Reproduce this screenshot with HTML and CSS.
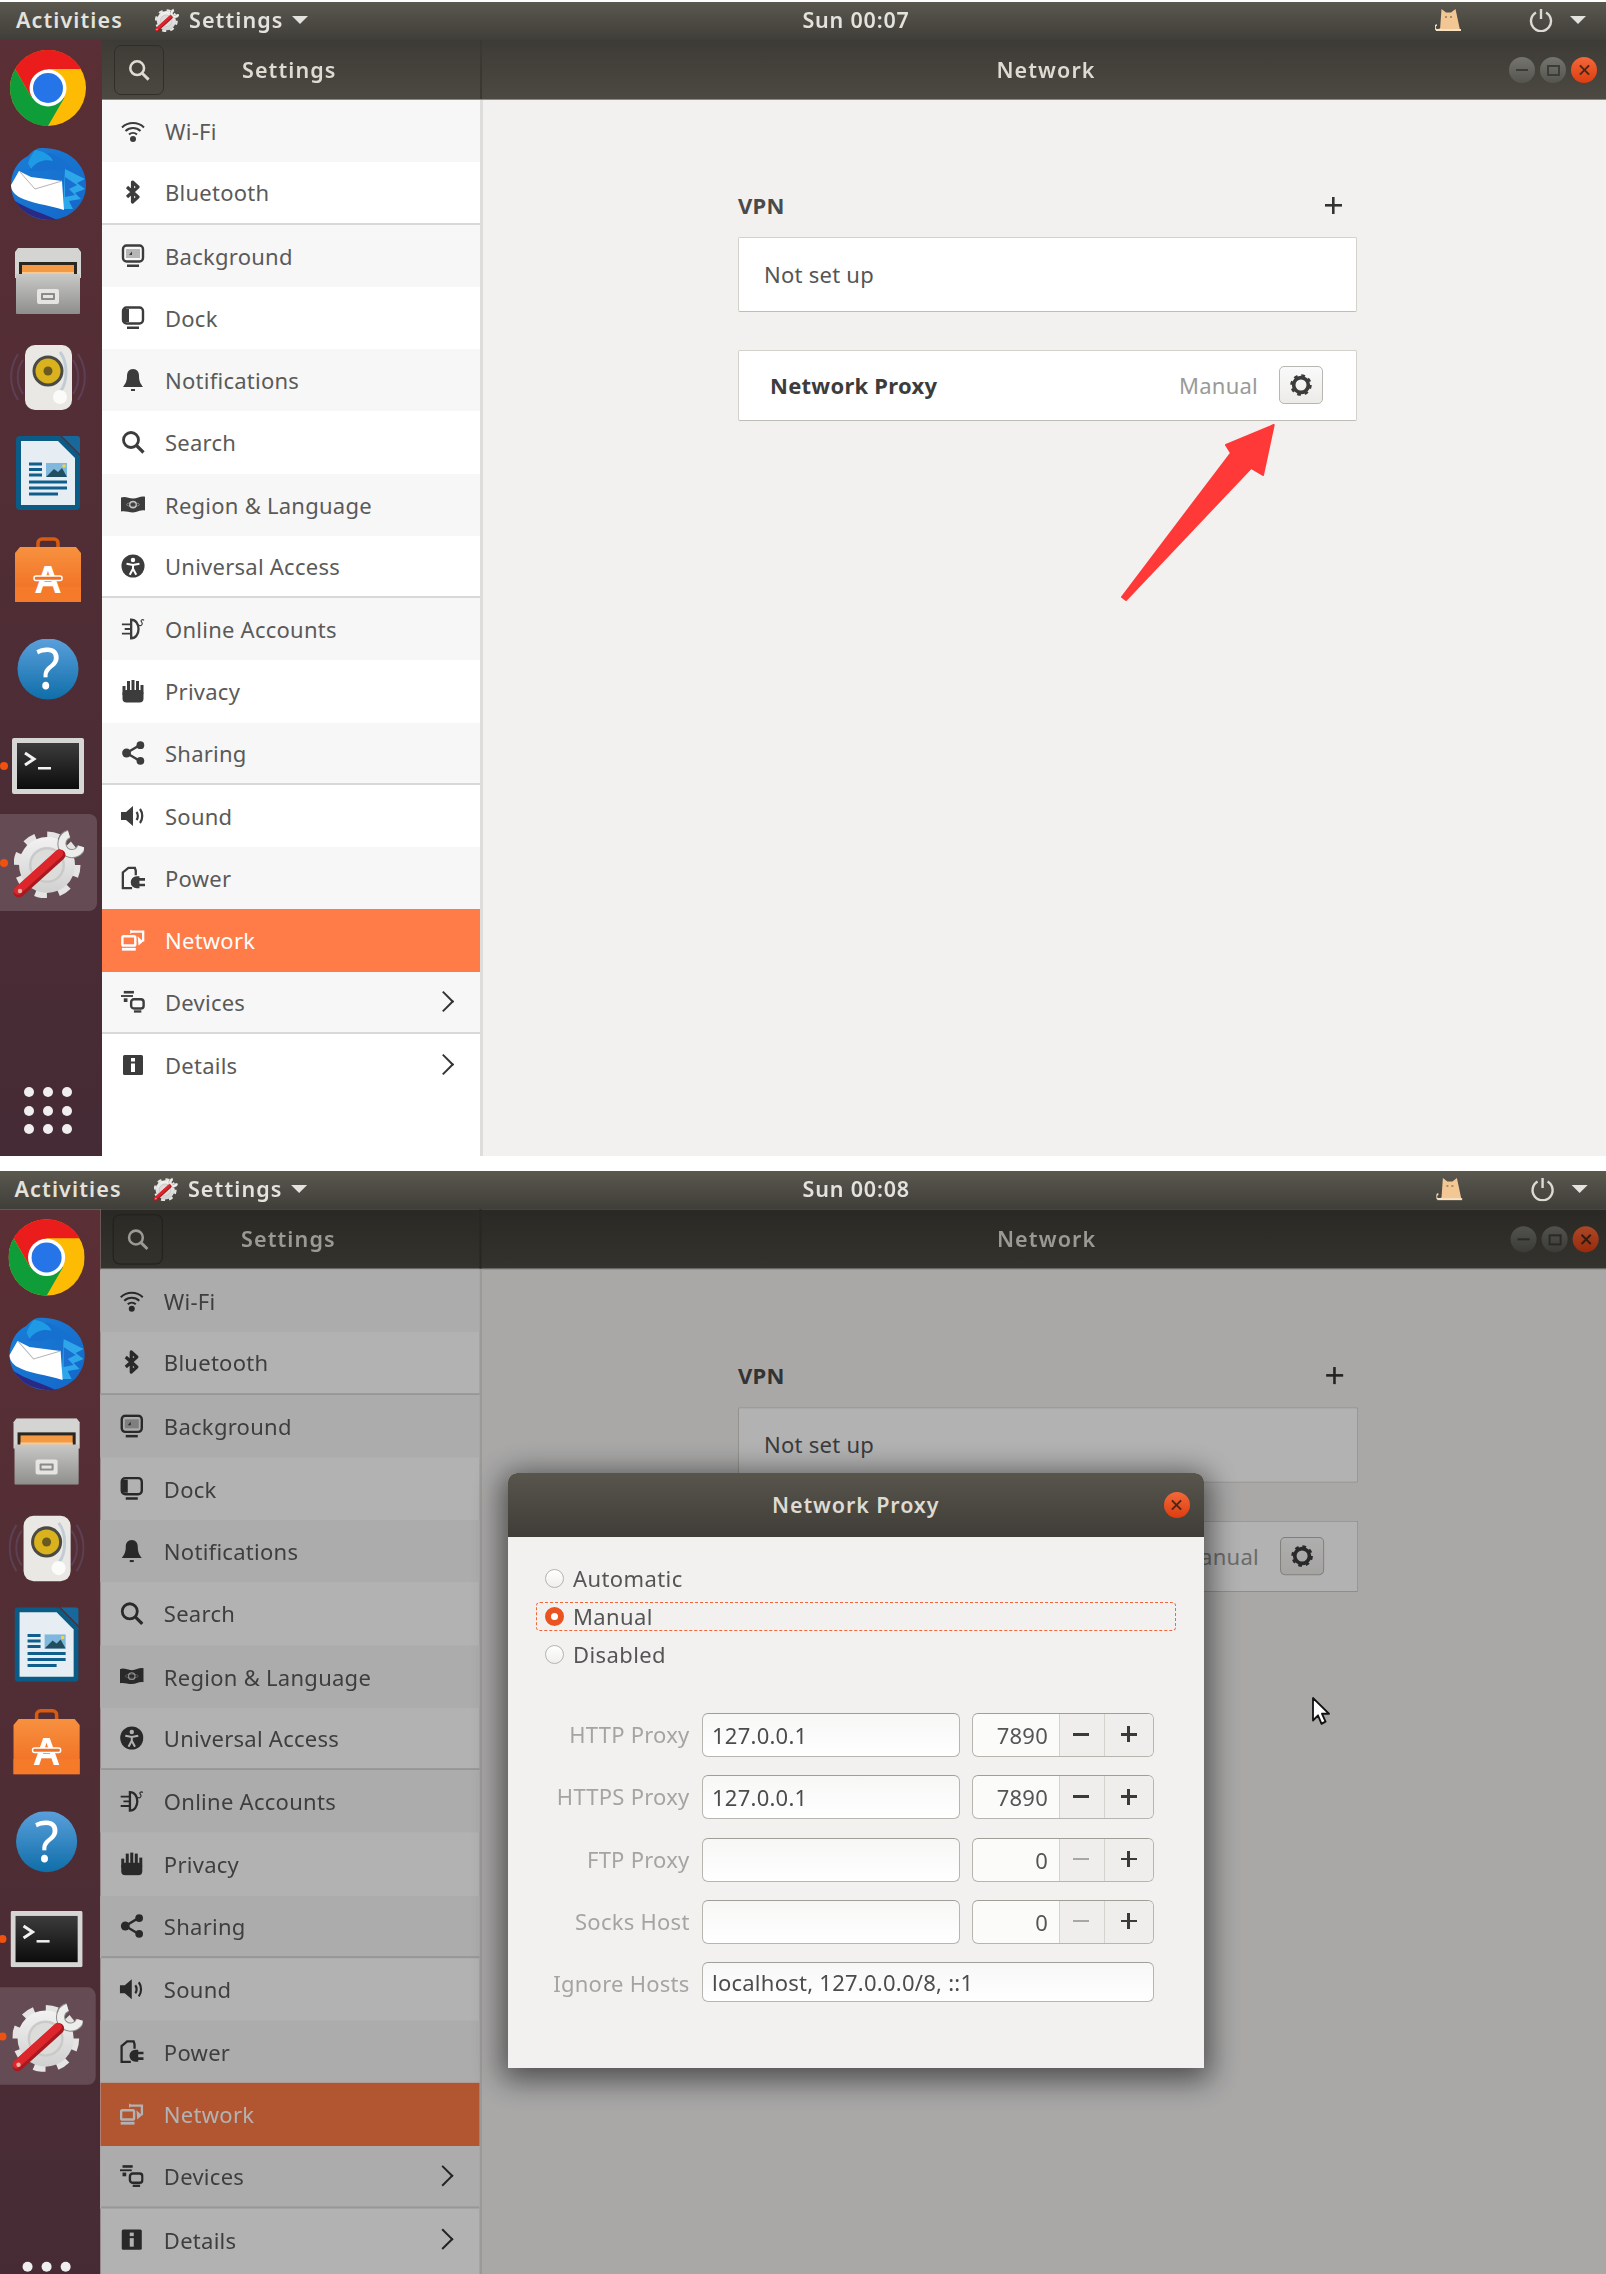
FILE: index.html
```html
<!DOCTYPE html>
<html lang="en">
<head>
    <meta charset="UTF-8">
    <title>Network Proxy settings</title>
    <link rel="stylesheet" href="styles.css">
</head>
<body>

<!-- icons, used by both screenshots -->
<svg class="defs" xmlns="http://www.w3.org/2000/svg">
    <defs>
        <linearGradient id="g-blue" x1="0" y1="0" x2="0" y2="1"><stop offset="0" stop-color="#5aa0dc"/><stop offset="1" stop-color="#0f6ea8"/></linearGradient>
        <linearGradient id="g-bird" x1="0" y1="0" x2="1" y2="1"><stop offset="0" stop-color="#1a7fd8"/><stop offset="1" stop-color="#1466c8"/></linearGradient>
        <linearGradient id="g-metal" x1="0" y1="0" x2="0" y2="1"><stop offset="0" stop-color="#c8c8c6"/><stop offset="1" stop-color="#8e8e8c"/></linearGradient>
        <linearGradient id="g-bag" x1="0" y1="0" x2="0" y2="1"><stop offset="0" stop-color="#f7913f"/><stop offset="1" stop-color="#f06a20"/></linearGradient>
        <linearGradient id="g-term" x1="0" y1="0" x2="0" y2="1"><stop offset="0" stop-color="#3c3c3c"/><stop offset="1" stop-color="#0c0c0c"/></linearGradient>
        <linearGradient id="g-gear" x1="0" y1="0" x2="0" y2="1"><stop offset="0" stop-color="#f2f2f2"/><stop offset="1" stop-color="#d0d0d0"/></linearGradient>
    </defs>

    <symbol id="i-wifi" viewBox="0 0 24 24"><path d="M1 8.500a16 16 0 0 1 22 0M4.500 12a11 11 0 0 1 15 0M8 15.500a6 6 0 0 1 8 0" fill="none" stroke="currentColor" stroke-width="2"/><circle cx="12" cy="20" r="3"/></symbol>
    <symbol id="i-bt" viewBox="0 0 24 24"><path d="M6 7l11 10-5.500 5V2L17 7 6 17" fill="none" stroke="currentColor" stroke-width="3.200" stroke-linejoin="round"/></symbol>
    <symbol id="i-bg" viewBox="0 0 24 24"><rect x="2" y="1.500" width="20" height="16" rx="3.500" fill="none" stroke="currentColor" stroke-width="2.400"/><rect x="5" y="5" width="14" height="9" opacity=".35"/><path d="M8 11l3-3.500V11z"/><rect x="6" y="20.500" width="12" height="2.500"/></symbol>
    <symbol id="i-dock" viewBox="0 0 24 24"><rect x="2" y="1.500" width="20" height="16" rx="3.500" fill="none" stroke="currentColor" stroke-width="2.400"/><rect x="3" y="3" width="5" height="13"/><rect x="6" y="20.500" width="12" height="2.500"/></symbol>
    <symbol id="i-bell" viewBox="0 0 24 24"><path d="M12 1C8 1 6 4 6 8c0 6-2 8-4 11h20c-2-3-4-5-4-11 0-4-2-7-6-7z"/><rect x="10" y="21" width="4" height="2"/></symbol>
    <symbol id="i-search" viewBox="0 0 24 24"><circle cx="10" cy="10" r="7.500" fill="none" stroke="currentColor" stroke-width="2.800"/><path d="M15.500 15.500L22.500 22.500" stroke="currentColor" stroke-width="3.200"/></symbol>
    <symbol id="i-flag" viewBox="0 0 26 24"><path d="M0 4c5-2 8 1 13 1s8-3 13-2v15c-5-1-8 2-13 2s-8-2-13-1z"/><circle cx="13" cy="11.500" r="3.500" fill="none" stroke="#fff" stroke-opacity=".7" stroke-width="1.400"/><ellipse cx="13" cy="11.500" rx="7" ry="2" fill="none" stroke="#fff" stroke-opacity=".35"/></symbol>
    <symbol id="i-ua" viewBox="0 0 26 26"><circle cx="13" cy="13" r="12.500"/><circle cx="13" cy="6.500" r="2.400" fill="#fff"/><path d="M6 10.500l7 1.500 7-1.500M13 12v4.500M13 16l-3.500 6.500M13 16l3.500 6.500" fill="none" stroke="#fff" stroke-width="2.200"/></symbol>
    <symbol id="i-plug" viewBox="0 0 26 24"><path d="M11 2c5 0 8 4.500 8 10s-3 10-8 10z" fill="none" stroke="currentColor" stroke-width="2.500"/><path d="M1 7h10M1 17h10M4 12h7" stroke="currentColor" stroke-width="2"/><path d="M25 2.500c-2-1.500-4 0-3 1.500s2 2 .5 3.500-3 .5-3.500 0" fill="none" stroke="currentColor" stroke-width="1.200"/></symbol>
    <symbol id="i-hand" viewBox="0 0 24 24"><rect x="1.500" y="11" width="21" height="12.500" rx="4"/><rect x="1.500" y="7" width="3" height="9"/><rect x="6" y="2" width="3" height="12"/><rect x="10.500" y="1" width="3" height="12"/><rect x="15" y="2" width="3" height="12"/><rect x="19.500" y="6" width="3" height="9"/></symbol>
    <symbol id="i-share" viewBox="0 0 26 26"><path d="M6 13L21 4M6 13l15 9" stroke="currentColor" stroke-width="2.600"/><circle cx="6" cy="13" r="4.800"/><circle cx="21" cy="4.500" r="4.200"/><circle cx="21" cy="21.500" r="4.200"/></symbol>
    <symbol id="i-sound" viewBox="0 0 24 24"><path d="M0 8h5l7-6v20l-7-6H0z"/><path d="M15.500 8c1.800 2 1.800 6 0 8M19 5c3 4 3 10 0 14" fill="none" stroke="currentColor" stroke-width="2.200"/></symbol>
    <symbol id="i-power" viewBox="0 0 26 26"><path d="M2 25V7l6-5h7l1 3v5M1 24h11" fill="none" stroke="currentColor" stroke-width="2.500"/><path d="M20 11v13h-3a6.500 6.500 0 0 1 0-13z"/><path d="M19 14.500h7M19 20.500h7" stroke="currentColor" stroke-width="2.800"/></symbol>
    <symbol id="i-net" viewBox="0 0 26 24"><rect x="1.500" y="8" width="14" height="10" rx="1.500" fill="none" stroke="currentColor" stroke-width="2.600"/><rect x="1" y="20.500" width="15" height="3"/><path d="M11 3h13v10.500" fill="none" stroke="currentColor" stroke-width="2.500"/><path d="M18 8l6 5.500L19 18z"/><path d="M10 0.500v5l3-2.500z"/></symbol>
    <symbol id="i-dev" viewBox="0 0 26 24"><rect x="3" y="0" width="11" height="2.800"/><rect x="0" y="4.500" width="13" height="2"/><rect x="3" y="8" width="4" height="4"/><rect x="11" y="9" width="13.500" height="10" rx="3" fill="none" stroke="currentColor" stroke-width="2.600"/><rect x="14" y="21" width="8" height="2.500"/></symbol>
    <symbol id="i-info" viewBox="0 0 24 24"><rect x="2" y="2" width="20" height="20" rx="1.500"/><rect x="10" y="5" width="4" height="3.500" fill="#fff"/><rect x="10" y="10.500" width="4" height="8.500" fill="#fff"/></symbol>

    <symbol id="a-chrome" viewBox="0 0 76 76">
        <circle cx="38" cy="38" r="38" fill="#fdbb04"/>
        <path d="M71 19A38 38 0 0 0 5.100 19L21.500 47.500 38 19z" fill="#ea1c1c"/>
        <path d="M5.100 19A38 38 0 0 0 38 76L54.500 47.500H21.500z" fill="#0f9d3a"/>
        <circle cx="38" cy="38" r="18.500" fill="#fff"/>
        <circle cx="38" cy="38" r="15" fill="#2675e8"/>
    </symbol>
    <symbol id="a-bird" viewBox="0 0 78 74">
        <path d="M32 1C55 0 77 14 77 38 77 58 60 73 40 73 20 73 2 58 2 38 2 26 8 14 19 9 23 4 28 1 32 1z" fill="url(#g-bird)"/>
        <path d="M20 24C24 14 30 8 40 6 52 10 66 20 70 34 60 24 46 20 34 24z" fill="#1570cf"/>
        <path d="M26 3C34 4 42 8 44 14 36 12 28 14 22 22L19 16C21 10 24 6 26 3z" fill="#1f9ae4"/>
        <path d="M56 22L76 32 68 36 76 42 66 46 72 52 60 54 64 62 54 62z" fill="#2ea6ea"/>
        <path d="M56 30L68 38 60 42 66 48 56 50z" fill="#1a6fd0"/>
        <path d="M6 54C14 68 30 74 48 73 34 66 18 62 6 54z" fill="#2a2a86"/>
        <path d="M2 38L10 24 22 30 53 34 55 63C40 58 20 56 10 50 5 47 2 43 2 38z" fill="#fff"/>
        <path d="M11 25L26 42 53 34" fill="none" stroke="#b5b5b5" stroke-width="1"/>
    </symbol>
    <symbol id="a-files" viewBox="0 0 68 66">
        <path d="M4 0h60l3 4v26H1V4z" fill="#d4d4d2"/>
        <rect x="5" y="14" width="58" height="16" fill="#2a2620"/>
        <rect x="8" y="17" width="52" height="13" fill="#f49a45"/>
        <rect x="8" y="24" width="52" height="3" fill="#f8c890"/>
        <rect x="2" y="26" width="64" height="40" rx="1" fill="url(#g-metal)"/>
        <rect x="23" y="41" width="22" height="15" rx="2" fill="#ecebe8" opacity=".9"/>
        <rect x="27" y="45" width="14" height="7" rx="1" fill="#8a8a88"/>
        <rect x="29" y="47" width="10" height="3" fill="#e4e4e2"/>
    </symbol>
    <symbol id="a-sound" viewBox="0 0 76 70">
        <path d="M8 12a42 42 0 0 0 0 46M68 12a42 42 0 0 1 0 46M13 18a30 30 0 0 0 0 34M63 18a30 30 0 0 1 0 34" fill="none" stroke="#6f6a9c" stroke-width="2" opacity=".3"/>
        <rect x="15" y="3" width="47" height="65" rx="10" fill="#e9e8e4"/>
        <path d="M50 10c8 10 8 30 0 40" fill="none" stroke="#c2ccd6" stroke-width="3"/>
        <circle cx="38" cy="29" r="15.500" fill="#4a4a44"/>
        <circle cx="38" cy="29" r="12.500" fill="#d9b21e"/>
        <circle cx="38" cy="29" r="4.500" fill="#6a5a20"/>
        <circle cx="50" cy="55" r="7" fill="#fbfbfa"/>
    </symbol>
    <symbol id="a-writer" viewBox="0 0 64 74">
        <path d="M4 0h40l20 20v50a4 4 0 0 1-4 4H4a4 4 0 0 1-4-4V4a4 4 0 0 1 4-4z" fill="#0a5c86"/>
        <path d="M5 5h37l17 17v47H5z" fill="#e6eef3"/>
        <path d="M46 0h15a3 3 0 0 1 3 3v15z" fill="#18699b"/>
        <path d="M13 28h13M13 33.500h13M13 39h13M13 46h38M13 52h38M13 58h29" stroke="#0f5e8c" stroke-width="3"/>
        <rect x="30" y="27" width="21" height="14" fill="#7fb8dc"/>
        <path d="M30 41l8-8 4 3 4-4 5 9z" fill="#214f60"/>
        <circle cx="48" cy="30" r="1.800" fill="#f2d640"/>
    </symbol>
    <symbol id="a-shop" viewBox="0 0 68 66">
        <path d="M24 14V6a4 4 0 0 1 4-4h12a4 4 0 0 1 4 4v8" fill="none" stroke="#d75c12" stroke-width="3.500"/>
        <path d="M6 10h56l5 6v49H1V16z" fill="url(#g-bag)"/>
        <rect x="1" y="50" width="66" height="15" fill="#f57a2a"/>
    </symbol>
    <symbol id="a-help" viewBox="0 0 64 62">
        <circle cx="32" cy="30" r="30.500" fill="url(#g-blue)"/>
    </symbol>
    <symbol id="a-term" viewBox="0 0 72 56">
        <rect x="0" y="0" width="72" height="56" rx="2" fill="#d6d6d4"/>
        <rect x="5" y="5" width="62" height="46" fill="url(#g-term)"/>
        <path d="M13 15l9 6-9 6" fill="none" stroke="#f2f2f2" stroke-width="3"/>
        <rect x="26" y="29" width="13" height="2.500" fill="#f2f2f2"/>
    </symbol>
    <symbol id="a-gear" viewBox="0 0 70 70">
        <circle cx="33" cy="37" r="30" fill="none" stroke="#e4e4e2" stroke-width="7" stroke-dasharray="11.780 11.780"/>
        <circle cx="33" cy="37" r="28" fill="url(#g-gear)"/>
        <circle cx="33" cy="37" r="18" fill="#cacac8"/>
        <circle cx="33" cy="37" r="15.500" fill="#dcdcda"/>
        <path d="M55 6A10 10 0 1 0 67.500 18.500" fill="none" stroke="#8e8e8c" stroke-width="9"/>
        <path d="M55 6A10 10 0 1 0 67.500 18.500" fill="none" stroke="#ededeb" stroke-width="7"/>
        <path d="M5 64L46 27" stroke="#a81a20" stroke-width="11" stroke-linecap="round"/>
        <path d="M4 62.500L45 25.500" stroke="#dc262c" stroke-width="8" stroke-linecap="round"/>
        <circle cx="6" cy="63" r="2.200" fill="#eeb0a8"/>
    </symbol>
    <symbol id="i-cat" viewBox="0 0 26 24">
        <path d="M6.500 1l4.500 3.500h5L20.500 1 25 22H5z" fill="#f2c794"/>
        <path d="M6 21c-3 1-6 1-6-1s1-3 2-3" fill="none" stroke="#f2e0c6" stroke-width="1.500"/>
        <rect x="1" y="21" width="25" height="2" fill="#f7e2c4"/>
        <path d="M10 9h2M15 9h2" stroke="#6b4a30"/>
    </symbol>
    <symbol id="i-gearsmall" viewBox="0 0 24 24">
        <circle cx="12" cy="12" r="8" fill="none" stroke="currentColor" stroke-width="4"/>
        <circle cx="12" cy="12" r="10" fill="none" stroke="currentColor" stroke-width="3.500" stroke-dasharray="3.900 3.950"/>
    </symbol>
    <symbol id="i-power-btn" viewBox="0 0 24 24"><path d="M7 4.500a10 10 0 1 0 10 0" fill="none" stroke="currentColor" stroke-width="2.400"/><path d="M12 1v10" stroke="currentColor" stroke-width="2.400"/></symbol>
</svg>

<!-- first screenshot: network panel -->
<div class="shot shot-first">
    <div class="screen">
        <div class="topbar">
            <span class="bar-item activities">Activities</span>
            <svg class="bar-gear"><use href="#a-gear"/></svg>
            <span class="bar-item">Settings</span>
            <span class="caret"></span>
            <span class="clock">Sun 00:07</span>
            <svg class="bar-cat"><use href="#i-cat"/></svg>
            <svg class="bar-power"><use href="#i-power-btn"/></svg>
            <span class="caret caret-end"></span>
        </div>
        <div class="desktop">
            <div class="dock">
                <div class="slot"><svg class="app-chrome"><use href="#a-chrome"/></svg></div>
                <div class="slot"><svg class="app-bird"><use href="#a-bird"/></svg></div>
                <div class="slot"><svg class="app-files"><use href="#a-files"/></svg></div>
                <div class="slot"><svg class="app-sound"><use href="#a-sound"/></svg></div>
                <div class="slot"><svg class="app-writer"><use href="#a-writer"/></svg></div>
                <div class="slot"><svg class="app-shop" viewBox="0 0 68 66"><use href="#a-shop"/><text x="34" y="56" class="shop-a">A</text><rect x="20" y="39" width="28" height="4.500" rx="2" class="shop-bar"/></svg></div>
                <div class="slot slot-help"><svg class="app-help" viewBox="0 0 64 62"><use href="#a-help"/><text x="32" y="50" class="help-q">?</text></svg></div>
                <div class="slot running"><svg class="app-term"><use href="#a-term"/></svg></div>
                <div class="slot running current"><svg class="app-gear"><use href="#a-gear"/></svg></div>
                <div class="apps-grid"><i></i><i></i><i></i><i></i><i></i><i></i><i></i><i></i><i></i></div>
            </div>
            <div class="window">
                <div class="win-header">
                    <div class="head-left">
                        <span class="search-btn"><svg class="ico-head"><use href="#i-search"/></svg></span>
                        <span class="head-title">Settings</span>
                    </div>
                    <div class="head-right">
                        <span class="head-title">Network</span>
                        <div class="win-controls">
                            <span class="wc wc-min"></span>
                            <span class="wc wc-max"></span>
                            <span class="wc wc-close"></span>
                        </div>
                    </div>
                </div>
                <div class="win-body">
                    <ul class="sidebar">
                        <li class="row"><svg class="ico"><use href="#i-wifi"/></svg>Wi-Fi</li>
                        <li class="row sep"><svg class="ico"><use href="#i-bt"/></svg>Bluetooth</li>
                        <li class="row"><svg class="ico"><use href="#i-bg"/></svg>Background</li>
                        <li class="row"><svg class="ico"><use href="#i-dock"/></svg>Dock</li>
                        <li class="row"><svg class="ico"><use href="#i-bell"/></svg>Notifications</li>
                        <li class="row"><svg class="ico"><use href="#i-search"/></svg>Search</li>
                        <li class="row"><svg class="ico"><use href="#i-flag"/></svg>Region &amp; Language</li>
                        <li class="row sep"><svg class="ico"><use href="#i-ua"/></svg>Universal Access</li>
                        <li class="row"><svg class="ico"><use href="#i-plug"/></svg>Online Accounts</li>
                        <li class="row"><svg class="ico"><use href="#i-hand"/></svg>Privacy</li>
                        <li class="row sep"><svg class="ico"><use href="#i-share"/></svg>Sharing</li>
                        <li class="row"><svg class="ico"><use href="#i-sound"/></svg>Sound</li>
                        <li class="row"><svg class="ico"><use href="#i-power"/></svg>Power</li>
                        <li class="row active"><svg class="ico"><use href="#i-net"/></svg>Network</li>
                        <li class="row sep"><svg class="ico"><use href="#i-dev"/></svg>Devices<span class="chev"></span></li>
                        <li class="row"><svg class="ico"><use href="#i-info"/></svg>Details<span class="chev"></span></li>
                    </ul>
                    <div class="main">
                        <div class="vpn-head"><b>VPN</b><span class="plus"></span></div>
                        <div class="card card-vpn">Not set up</div>
                        <div class="card card-proxy">
                            <b>Network Proxy</b>
                            <span class="state">Manual</span>
                            <span class="gear-btn"><svg class="ico-gear"><use href="#i-gearsmall"/></svg></span>
                        </div>
                    </div>
                </div>
            </div>
        </div>
    </div>
    <svg class="red-arrow" viewBox="0 0 170 185"><polygon points="163.700,3 116,23 121,31 12,175 16,178 141,46 153,53"/></svg>
</div>

<!-- second screenshot: proxy dialog open -->
<div class="shot shot-second">
    <div class="screen">
        <div class="topbar">
            <span class="bar-item activities">Activities</span>
            <svg class="bar-gear"><use href="#a-gear"/></svg>
            <span class="bar-item">Settings</span>
            <span class="caret"></span>
            <span class="clock">Sun 00:08</span>
            <svg class="bar-cat"><use href="#i-cat"/></svg>
            <svg class="bar-power"><use href="#i-power-btn"/></svg>
            <span class="caret caret-end"></span>
        </div>
        <div class="desktop">
            <div class="dock">
                <div class="slot"><svg class="app-chrome"><use href="#a-chrome"/></svg></div>
                <div class="slot"><svg class="app-bird"><use href="#a-bird"/></svg></div>
                <div class="slot"><svg class="app-files"><use href="#a-files"/></svg></div>
                <div class="slot"><svg class="app-sound"><use href="#a-sound"/></svg></div>
                <div class="slot"><svg class="app-writer"><use href="#a-writer"/></svg></div>
                <div class="slot"><svg class="app-shop" viewBox="0 0 68 66"><use href="#a-shop"/><text x="34" y="56" class="shop-a">A</text><rect x="20" y="39" width="28" height="4.500" rx="2" class="shop-bar"/></svg></div>
                <div class="slot slot-help"><svg class="app-help" viewBox="0 0 64 62"><use href="#a-help"/><text x="32" y="50" class="help-q">?</text></svg></div>
                <div class="slot running"><svg class="app-term"><use href="#a-term"/></svg></div>
                <div class="slot running current"><svg class="app-gear"><use href="#a-gear"/></svg></div>
                <div class="apps-grid"><i></i><i></i><i></i><i></i><i></i><i></i><i></i><i></i><i></i></div>
            </div>
            <div class="window">
                <div class="win-header">
                    <div class="head-left">
                        <span class="search-btn"><svg class="ico-head"><use href="#i-search"/></svg></span>
                        <span class="head-title">Settings</span>
                    </div>
                    <div class="head-right">
                        <span class="head-title">Network</span>
                        <div class="win-controls">
                            <span class="wc wc-min"></span>
                            <span class="wc wc-max"></span>
                            <span class="wc wc-close"></span>
                        </div>
                    </div>
                </div>
                <div class="win-body">
                    <ul class="sidebar">
                        <li class="row"><svg class="ico"><use href="#i-wifi"/></svg>Wi-Fi</li>
                        <li class="row sep"><svg class="ico"><use href="#i-bt"/></svg>Bluetooth</li>
                        <li class="row"><svg class="ico"><use href="#i-bg"/></svg>Background</li>
                        <li class="row"><svg class="ico"><use href="#i-dock"/></svg>Dock</li>
                        <li class="row"><svg class="ico"><use href="#i-bell"/></svg>Notifications</li>
                        <li class="row"><svg class="ico"><use href="#i-search"/></svg>Search</li>
                        <li class="row"><svg class="ico"><use href="#i-flag"/></svg>Region &amp; Language</li>
                        <li class="row sep"><svg class="ico"><use href="#i-ua"/></svg>Universal Access</li>
                        <li class="row"><svg class="ico"><use href="#i-plug"/></svg>Online Accounts</li>
                        <li class="row"><svg class="ico"><use href="#i-hand"/></svg>Privacy</li>
                        <li class="row sep"><svg class="ico"><use href="#i-share"/></svg>Sharing</li>
                        <li class="row"><svg class="ico"><use href="#i-sound"/></svg>Sound</li>
                        <li class="row"><svg class="ico"><use href="#i-power"/></svg>Power</li>
                        <li class="row active"><svg class="ico"><use href="#i-net"/></svg>Network</li>
                        <li class="row sep"><svg class="ico"><use href="#i-dev"/></svg>Devices<span class="chev"></span></li>
                        <li class="row"><svg class="ico"><use href="#i-info"/></svg>Details<span class="chev"></span></li>
                    </ul>
                    <div class="main">
                        <div class="vpn-head"><b>VPN</b><span class="plus"></span></div>
                        <div class="card card-vpn">Not set up</div>
                        <div class="card card-proxy">
                            <b>Network Proxy</b>
                            <span class="state">Manual</span>
                            <span class="gear-btn"><svg class="ico-gear"><use href="#i-gearsmall"/></svg></span>
                        </div>
                    </div>
                </div>
                <div class="dim"></div>
            </div>
        </div>
    </div>

    <div class="dialog">
        <div class="dlg-head">
            <span class="dlg-title">Network Proxy</span>
            <span class="wc wc-close dlg-close"></span>
        </div>
        <div class="dlg-body">
            <div class="radio-row"><span class="radio"></span>Automatic</div>
            <div class="radio-row focus"><span class="radio on"></span>Manual</div>
            <div class="radio-row"><span class="radio"></span>Disabled</div>

            <div class="form">
                <label>HTTP Proxy</label>
                <div class="entry">127.0.0.1</div>
                <div class="spin"><span class="val">7890</span><span class="sb minus"></span><span class="sb plus-b"></span></div>

                <label>HTTPS Proxy</label>
                <div class="entry">127.0.0.1</div>
                <div class="spin"><span class="val">7890</span><span class="sb minus"></span><span class="sb plus-b"></span></div>

                <label>FTP Proxy</label>
                <div class="entry"></div>
                <div class="spin"><span class="val">0</span><span class="sb minus off"></span><span class="sb plus-b"></span></div>

                <label>Socks Host</label>
                <div class="entry"></div>
                <div class="spin"><span class="val">0</span><span class="sb minus off"></span><span class="sb plus-b"></span></div>

                <label>Ignore Hosts</label>
                <div class="entry entry-wide">localhost, 127.0.0.0/8, ::1</div>
            </div>
        </div>
    </div>

    <svg class="cursor" viewBox="0 0 20 26" preserveAspectRatio="none"><path d="M2 1v20l5-4.500 3.500 7.500 4-2-3.500-7H18z" fill="#fff" stroke="#111" stroke-width="1.800" stroke-linejoin="round"/></svg>
</div>

</body>
</html>
```

FILE: styles.css
```css
html, body {
    margin: 0;
    padding: 0;
}
body {
    height: 2274px;
    overflow: hidden;
    background: #fff;
    font-family: "Noto Sans", sans-serif;
    font-size: 22px;
    letter-spacing: 0.25px;
    color: #555;
}
.defs {
    position: absolute;
    width: 0;
    height: 0;
}
svg {
    fill: currentColor;
}

/* the two pictures, stacked */
.shot {
    position: relative;
    overflow: hidden;
    filter: blur(0.5px);
}
.shot-first {
    margin-top: 2px;
    height: 1154px;
}
.shot-second {
    margin-top: 15px;
    height: 1103px;
}
.shot-second .screen {
    transform-origin: 0 0;
    transform: translateX(-1.5px) scale(1.002, 1.0053);
}
.screen {
    width: 1606px;
    height: 1154px;
    display: flex;
    flex-direction: column;
}

/* top bar */
.topbar {
    height: 38px;
    flex: none;
    box-sizing: border-box;
    padding: 0 0 3px 16px;
    display: flex;
    align-items: center;
    position: relative;
    background: linear-gradient(#5a584f, #3f3e38);
    color: #e4e2dc;
    font-weight: 600;
    font-size: 21.5px;
    letter-spacing: 1.1px;
}
.bar-item {
    white-space: nowrap;
}
.activities {
    width: 139px;
}
.bar-gear {
    width: 24px;
    height: 24px;
    margin-right: 10px;
}
.caret {
    width: 0;
    height: 0;
    margin-left: 8px;
    border-left: 8px solid transparent;
    border-right: 8px solid transparent;
    border-top: 8px solid #e4e2dc;
}
.clock {
    position: absolute;
    left: 0;
    right: 0;
    padding-left: 106px;
    text-align: center;
    letter-spacing: 0.8px;
    pointer-events: none;
}
.bar-cat {
    width: 26px;
    height: 24px;
    margin-left: auto;
}
.bar-power {
    width: 24px;
    height: 24px;
    margin-left: 68px;
    color: #dcdad4;
}
.caret-end {
    margin-left: 17px;
    margin-right: 20px;
}

.desktop {
    flex: 1;
    display: flex;
    min-height: 0;
}

/* dock */
.dock {
    width: 102px;
    flex: none;
    padding-right: 6px;
    box-sizing: border-box;
    display: flex;
    flex-direction: column;
    background: linear-gradient(#5a2f35, #452b35);
}
.slot {
    height: 96.3px;
    flex: none;
    display: flex;
    align-items: center;
    justify-content: center;
    position: relative;
}
.slot-help {
    margin-top: 4px;
}
.slot.current {
    margin-right: -1px;
    border-radius: 0 8px 8px 0;
    background: rgba(255, 255, 255, 0.15);
}
.running::before {
    content: "";
    position: absolute;
    left: 0;
    top: 50%;
    width: 8px;
    height: 8px;
    margin-top: -4px;
    border-radius: 50%;
    background: #f0510f;
}
.app-chrome { width: 76px; height: 76px; }
.app-bird { width: 78px; height: 74px; }
.app-files { width: 68px; height: 66px; }
.app-sound { width: 76px; height: 70px; }
.app-writer { width: 64px; height: 74px; }
.app-shop { width: 68px; height: 66px; }
.app-help { width: 64px; height: 62px; overflow: visible; }
.app-term { width: 72px; height: 56px; }
.app-gear { width: 70px; height: 70px; }
.shop-a {
    font: bold 38px "Liberation Sans", sans-serif;
    letter-spacing: 0;
    fill: #fff;
    text-anchor: middle;
}
.shop-bar {
    fill: #f07028;
    stroke: #fff;
    stroke-width: 1.5;
}
.help-q {
    font: 56px "Noto Sans", sans-serif;
    letter-spacing: 0;
    fill: #fff;
    text-anchor: middle;
}
.apps-grid {
    margin-top: auto;
    margin-bottom: 22px;
    display: grid;
    grid-template-columns: repeat(3, 10px);
    gap: 8.5px 9px;
    justify-content: center;
}
.apps-grid i {
    height: 10px;
    border-radius: 50%;
    background: #f0eeee;
}

/* window */
.window {
    flex: 1;
    min-width: 0;
    display: flex;
    flex-direction: column;
    position: relative;
}
.dim {
    position: absolute;
    inset: 0;
    background: rgba(0, 0, 0, 0.3);
}
.win-header {
    height: 60px;
    flex: none;
    box-sizing: border-box;
    display: flex;
    border-bottom: 1px solid #8a8984;
    background: linear-gradient(#3d3b35, #4b4941);
    color: #dedbd3;
}
.head-left {
    width: 378px;
    flex: none;
    display: flex;
    align-items: center;
    position: relative;
    border-right: 2px solid #3a3833;
}
.search-btn {
    width: 50px;
    height: 50px;
    margin-left: 12px;
    box-sizing: border-box;
    display: flex;
    align-items: center;
    justify-content: center;
    border: 1px solid #2f2e29;
    border-radius: 7px;
}
.ico-head {
    width: 22px;
    height: 22px;
    color: #dedbd3;
}
.head-title {
    font-weight: 600;
    font-size: 21.5px;
    letter-spacing: 1.1px;
}
.head-left .head-title {
    margin-left: 78px;
}
.head-right {
    flex: 1;
    padding-left: 4px;
    display: flex;
    align-items: center;
    justify-content: center;
    position: relative;
}
.win-controls {
    position: absolute;
    right: 9px;
    top: 17px;
    display: flex;
    gap: 5px;
}
.wc {
    width: 26px;
    height: 26px;
    display: block;
    position: relative;
    border-radius: 50%;
    background: linear-gradient(#757570, #55554f);
}
.wc-min::after {
    content: "";
    position: absolute;
    left: 7px;
    top: 12px;
    width: 12px;
    height: 2px;
    background: #3d3c37;
}
.wc-max::after {
    content: "";
    position: absolute;
    left: 7px;
    top: 8px;
    width: 9px;
    height: 7px;
    border: 2px solid #3d3c37;
}
.wc-close {
    background: linear-gradient(#f4683a, #dc3d10);
}
.wc-close::before,
.wc-close::after {
    content: "";
    position: absolute;
    left: 6.5px;
    top: 12px;
    width: 13px;
    height: 2px;
    background: #4c2718;
    transform: rotate(45deg);
}
.wc-close::after {
    transform: rotate(-45deg);
}

.win-body {
    flex: 1;
    display: flex;
    min-height: 0;
}

/* sidebar */
.sidebar {
    width: 378px;
    flex: none;
    margin: 0;
    padding: 0;
    list-style: none;
    background: #fff;
    border-right: 3px solid #dedddb;
}
.row {
    height: 62.25px;
    box-sizing: border-box;
    display: flex;
    align-items: center;
    position: relative;
    padding-left: 19px;
    color: #5a5a5a;
}
.row:nth-child(odd) {
    background: #f7f7f7;
}
.row.sep {
    border-bottom: 2px solid #d8d8d8;
}
.row.active {
    background: #ff7b47;
    color: #fff;
}
.ico {
    width: 24px;
    height: 24px;
    margin-right: 20px;
    color: #3c3c3c;
}
.row.active .ico {
    color: #fff;
}
.chev {
    position: absolute;
    right: 29px;
    top: 50%;
    width: 13px;
    height: 13px;
    margin-top: -8px;
    border-top: 2.5px solid #333;
    border-right: 2.5px solid #333;
    transform: rotate(45deg);
}

/* main panel */
.main {
    flex: 1;
    min-width: 0;
    box-sizing: border-box;
    padding: 86px 0 0 255px;
    background: #f2f1f0;
}
.vpn-head {
    width: 619px;
    height: 40px;
    margin-bottom: 11px;
    box-sizing: border-box;
    padding-bottom: 2px;
    display: flex;
    align-items: center;
    justify-content: space-between;
    color: #4a4a4a;
}
.plus {
    width: 17px;
    height: 17px;
    margin-right: 15px;
    background: linear-gradient(#333, #333) center / 100% 2.6px no-repeat,
                linear-gradient(#333, #333) center / 2.6px 100% no-repeat;
}
.card {
    width: 619px;
    box-sizing: border-box;
    display: flex;
    align-items: center;
    background: #fff;
    border: 1px solid #d3d1cc;
    border-bottom-color: #bfbdb8;
    border-radius: 2px;
}
.card-vpn {
    height: 75px;
    margin-bottom: 38px;
    padding: 0 0 2px 25px;
}
.card-proxy {
    height: 71px;
    padding: 0 33px 2px 31px;
}
.card-proxy b {
    color: #3c3c3c;
}
.state {
    margin-left: auto;
    margin-right: 21px;
    color: #9a9a98;
}
.gear-btn {
    width: 44px;
    height: 38px;
    box-sizing: border-box;
    display: flex;
    align-items: center;
    justify-content: center;
    border: 1px solid #b8b6b0;
    border-radius: 5px;
    background: linear-gradient(#fafafa, #ecebe8);
}
.ico-gear {
    width: 22px;
    height: 22px;
    color: #3c3c3c;
}

.red-arrow {
    position: absolute;
    left: 1110px;
    top: 420px;
    width: 170px;
    height: 185px;
    fill: #ff3838;
    stroke: #ff3838;
    stroke-width: 2;
    stroke-linejoin: round;
}

/* proxy dialog */
.dialog {
    position: absolute;
    left: 508px;
    top: 302px;
    width: 695.5px;
    height: 595px;
    display: flex;
    flex-direction: column;
    border-radius: 9px 9px 0 0;
    background: #f2f1f0;
    box-shadow: 0 6px 30px 6px rgba(0, 0, 0, 0.55);
}
.dlg-head {
    height: 64px;
    flex: none;
    box-sizing: border-box;
    padding-bottom: 2px;
    display: flex;
    align-items: center;
    justify-content: center;
    position: relative;
    border-radius: 9px 9px 0 0;
    background: linear-gradient(#57554c, #3f3d37);
    color: #dedbd3;
}
.dlg-title {
    font-weight: 600;
    font-size: 21.5px;
    letter-spacing: 0.9px;
}
.dlg-close {
    position: absolute;
    right: 14px;
    top: 19px;
}
.dlg-body {
    padding: 22px 28px 0;
}
.radio-row {
    height: 38px;
    box-sizing: border-box;
    display: flex;
    align-items: center;
    padding-left: 9px;
    color: #555;
    letter-spacing: 0.4px;
}
.radio-row.focus {
    height: 29px;
    margin: 4.5px 0;
    border: 1px dashed #f0683a;
    border-radius: 4px;
    padding-left: 8px;
}
.radio {
    width: 19px;
    height: 19px;
    box-sizing: border-box;
    margin-right: 9px;
    border: 1px solid #b5b3ad;
    border-radius: 50%;
    background: linear-gradient(#fff, #f0efed);
}
.radio.on {
    border: 6px solid #e95420;
    background: #fff;
}
.form {
    margin-top: 40px;
    display: grid;
    grid-template-columns: 153.6px 257.6px 182.5px;
    column-gap: 12.4px;
    row-gap: 18.3px;
    grid-auto-rows: 44px;
    align-items: stretch;
}
.form label {
    align-self: center;
    padding-bottom: 2px;
    text-align: right;
    white-space: nowrap;
    color: #a5a4a0;
}
.entry {
    box-sizing: border-box;
    display: flex;
    align-items: center;
    padding-left: 9px;
    border: 1.5px solid #b7b5af;
    border-top-color: #a09e98;
    border-radius: 6px;
    background: linear-gradient(#f7f7f6, #fff);
    color: #4c4c4c;
}
.entry-wide {
    grid-column: span 2;
    height: 40px;
}
.spin {
    box-sizing: border-box;
    display: flex;
    border: 1.5px solid #b7b5af;
    border-top-color: #a09e98;
    border-radius: 6px;
    overflow: hidden;
    background: #fbfbfa;
}
.val {
    flex: 1;
    align-self: center;
    padding-right: 11px;
    text-align: right;
    color: #555;
}
.sb {
    width: 45.5px;
    flex: none;
    box-sizing: border-box;
    position: relative;
    border-left: 1px solid #d4d3ce;
    background: #efeeec;
}
.plus-b {
    width: 49px;
}
.sb::before,
.plus-b::after {
    content: "";
    position: absolute;
    left: 48%;
    top: 50%;
    width: 16px;
    height: 2.6px;
    margin: -2px 0 0 -8px;
    background: #3a3a3a;
}
.plus-b::after {
    width: 2.6px;
    height: 16px;
    margin: -8.7px 0 0 -1.3px;
}
.minus.off::before {
    background: #a8a7a3;
}
.cursor {
    position: absolute;
    left: 1311px;
    top: 526px;
    width: 20px;
    height: 29px;
}
```
